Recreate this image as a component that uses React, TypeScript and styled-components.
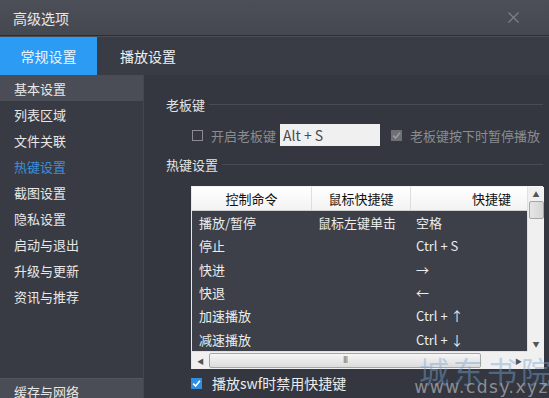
import React from "react";
import styled, { createGlobalStyle } from "styled-components";

const GlobalStyle = createGlobalStyle`
  html, body { margin: 0; padding: 0; background: #34373f; }
  * { box-sizing: border-box; }
`;

const FONT = `"Noto Sans CJK SC", "Noto Sans", sans-serif`;

const Window = styled.div`
  position: relative;
  width: 549px;
  height: 398px;
  overflow: hidden;
  display: flex;
  flex-direction: column;
  background: #34373f;
  font-family: ${FONT};
  font-size: 13px;
  color: #e6e6e6;
`;

const TitleBar = styled.div`
  height: 36px;
  flex: none;
  display: flex;
  align-items: center;
  justify-content: space-between;
  padding: 0 30px 0 13px;
  background: linear-gradient(#4c4f57, #45484f);
  border-bottom: 1px solid #2c2e33;
  font-size: 14px;
  color: #e8e8e8;
`;

const TabBar = styled.div`
  height: 39px;
  flex: none;
  display: flex;
  background: #393c44;
  border-top: 1px solid #4a4d55;
`;

const Tab = styled.div<{ $active?: boolean }>`
  width: ${(p) => (p.$active ? "97px" : "auto")};
  padding: ${(p) => (p.$active ? "0" : "0 0 0 23px")};
  display: flex;
  align-items: center;
  justify-content: ${(p) => (p.$active ? "center" : "flex-start")};
  font-size: 14px;
  background: ${(p) => (p.$active ? "#2b9bf4" : "transparent")};
  color: ${(p) => (p.$active ? "#eaf4ff" : "#f0f0f0")};
`;

const Body = styled.div`
  flex: 1;
  display: flex;
  min-height: 0;
`;

const Sidebar = styled.div`
  width: 144px;
  flex: none;
  display: flex;
  flex-direction: column;
  background: #383b43;
  border-right: 1px solid #44474e;
`;

const NavItem = styled.div<{ $selected?: boolean; $active?: boolean }>`
  height: 26px;
  flex: none;
  display: flex;
  align-items: center;
  padding-left: 14px;
  background: ${(p) => (p.$selected ? "#4a4d55" : "transparent")};
  color: ${(p) => (p.$active ? "#3a8fdc" : "#e8e8e8")};
`;

const Spacer = styled.div`
  flex: 1;
`;

const NavFooter = styled(NavItem)`
  height: 20px;
  align-items: flex-start;
  padding-top: 3px;
  background: #4a4d55;
  border-top: 1px solid #52555c;
`;

const Main = styled.div`
  flex: 1;
  display: flex;
  flex-direction: column;
  padding: 19px 8px 0 22px;
  background: #34373f;
`;

const SectionTitle = styled.div`
  display: flex;
  align-items: center;
  gap: 4px;
  height: 20px;
  color: #e4e4e4;
  &::after {
    content: "";
    flex: 1;
    height: 1px;
    background: #484b52;
  }
`;

const BossRow = styled.div`
  display: flex;
  align-items: center;
  height: 22px;
  margin: 10px 0 8px 26px;
  color: #8a8c91;
`;

const Box = styled.span<{ $disabled?: boolean; $blue?: boolean }>`
  width: 11px;
  height: 11px;
  flex: none;
  display: inline-flex;
  align-items: center;
  justify-content: center;
  border: 1px solid ${(p) => (p.$blue ? "#2f8ee0" : p.$disabled ? "#6e7075" : "#8a8c91")};
  background: ${(p) => (p.$blue ? "#2f8ee0" : p.$disabled ? "#6e7075" : "transparent")};
  margin-right: 8px;
`;

const KeyInput = styled.div`
  width: 100px;
  height: 22px;
  margin: 0 11px 0 4px;
  display: flex;
  align-items: center;
  padding-left: 3px;
  background: #f0f0f0;
  color: #4a4a4a;
  font-size: 14px;
`;

const Table = styled.div`
  margin: 12px 0 0 25px;
  width: 352px;
  height: 183px;
  flex: none;
  display: grid;
  grid-template-columns: 335px 17px;
  grid-template-rows: 164px 18px;
  border: 1px solid #e8e8e8;
  border-top-color: #f4f4f4;
  background: #3d4048;
`;

const Grid = styled.div`
  display: flex;
  flex-direction: column;
  overflow: hidden;
`;

const COLS = "120px 99px 116px";

const HeadRow = styled.div`
  height: 24px;
  flex: none;
  display: grid;
  grid-template-columns: ${COLS};
  background: linear-gradient(#ffffff, #f3f3f3);
  color: #111;
  border-bottom: 1px solid #d0d0d0;
`;

const HeadCell = styled.div<{ $align?: string }>`
  display: flex;
  align-items: center;
  justify-content: ${(p) => p.$align || "center"};
  padding-right: ${(p) => (p.$align === "flex-end" ? "16px" : "0")};
  border-right: 1px solid #dedede;
  &:last-child { border-right: none; }
`;

const Row = styled.div`
  height: 23.3px;
  flex: none;
  display: grid;
  grid-template-columns: ${COLS};
  align-items: center;
  color: #ececec;
`;

const Cell = styled.div<{ $pad: number }>`
  padding-left: ${(p) => p.$pad}px;
  white-space: nowrap;
`;

const VScroll = styled.div`
  display: flex;
  flex-direction: column;
  align-items: center;
  background: #f0f0f0;
  border-left: 1px solid #e0e0e0;
`;

const Arrow = styled.div`
  height: 14px;
  width: 100%;
  display: flex;
  align-items: center;
  justify-content: center;
  color: #555;
  font-size: 7px;
  flex: none;
`;

const VThumb = styled.div`
  width: 15px;
  height: 18px;
  flex: none;
  background: linear-gradient(90deg, #e6e6e6, #d4d4d4);
  border: 1px solid #a6a6a6;
  border-radius: 2px;
`;

const HScroll = styled.div`
  display: flex;
  align-items: center;
  background: #f0f0f0;
  border-top: 1px solid #e0e0e0;
`;

const HArrow = styled.div`
  width: 17px;
  flex: none;
  display: flex;
  justify-content: center;
  color: #555;
  font-size: 7px;
`;

const HThumb = styled.div`
  width: 272px;
  height: 15px;
  flex: none;
  display: flex;
  align-items: center;
  justify-content: center;
  background: linear-gradient(#f6f6f6, #dcdcdc);
  border: 1px solid #a6a6a6;
  border-radius: 2px;
  color: #777;
  font-family: "DejaVu Sans", sans-serif;
  font-size: 8px;
  letter-spacing: -1px;
`;

const Corner = styled.div`
  background: #f0f0f0;
`;

const SwfRow = styled.div`
  display: flex;
  align-items: center;
  margin: 6px 0 0 25px;
  height: 16px;
  color: #ececec;
  font-size: 14px;
`;

const SwfLabel = styled.span`
  margin-left: 2px;
`;

const Watermark = styled.div`
  position: absolute;
  right: -6px;
  bottom: 2px;
  display: flex;
  flex-direction: column;
  align-items: flex-end;
  pointer-events: none;
  line-height: 1;
`;

const WaterBig = styled.div`
  font-size: 30px;
  letter-spacing: 4px;
  color: rgba(120, 165, 215, 0.45);
`;

const WaterSmall = styled.div`
  font-family: "DejaVu Sans", sans-serif;
  font-size: 17px;
  letter-spacing: 1.5px;
  color: rgba(170, 172, 178, 0.75);
  margin-top: -6px;
  margin-right: 6px;
`;

const Check = ({ color }: { color: string }) => (
  <svg width="9" height="9" viewBox="0 0 9 9">
    <path d="M1.2 4.6 L3.6 7 L7.9 1.8" fill="none" stroke={color} strokeWidth="1.6" />
  </svg>
);

const nav = ["列表区域", "文件关联", "热键设置", "截图设置", "隐私设置", "启动与退出", "升级与更新", "资讯与推荐"];

const rows = [
  ["播放/暂停", "鼠标左键单击", "空格"],
  ["停止", "", "Ctrl + S"],
  ["快进", "", "→"],
  ["快退", "", "←"],
  ["加速播放", "", "Ctrl + ↑"],
  ["减速播放", "", "Ctrl + ↓"],
];

export default function App() {
  return (
    <Window>
      <GlobalStyle />
      <TitleBar>
        <span>高级选项</span>
        <svg width="11" height="11" viewBox="0 0 11 11">
          <path d="M0.5 0.5 L10.5 10.5 M10.5 0.5 L0.5 10.5" stroke="#7d8087" strokeWidth="1.2" />
        </svg>
      </TitleBar>
      <TabBar>
        <Tab $active>常规设置</Tab>
        <Tab>播放设置</Tab>
      </TabBar>
      <Body>
        <Sidebar>
          <NavItem $selected>基本设置</NavItem>
          {nav.map((n) => (
            <NavItem key={n} $active={n === "热键设置"}>
              {n}
            </NavItem>
          ))}
          <Spacer />
          <NavFooter>缓存与网络</NavFooter>
        </Sidebar>
        <Main>
          <SectionTitle>老板键</SectionTitle>
          <BossRow>
            <Box />
            开启老板键
            <KeyInput>Alt + S</KeyInput>
            <Box $disabled>
              <Check color="#9a9ca0" />
            </Box>
            老板键按下时暂停播放
          </BossRow>
          <SectionTitle>热键设置</SectionTitle>
          <Table>
            <Grid>
              <HeadRow>
                <HeadCell>控制命令</HeadCell>
                <HeadCell>鼠标快捷键</HeadCell>
                <HeadCell $align="flex-end">快捷键</HeadCell>
              </HeadRow>
              {rows.map((r) => (
                <Row key={r[0]}>
                  <Cell $pad={7}>{r[0]}</Cell>
                  <Cell $pad={6}>{r[1]}</Cell>
                  <Cell $pad={5}>{r[2]}</Cell>
                </Row>
              ))}
            </Grid>
            <VScroll>
              <Arrow>▲</Arrow>
              <VThumb />
              <Spacer />
              <Arrow>▼</Arrow>
            </VScroll>
            <HScroll>
              <HArrow>◀</HArrow>
              <HThumb>III</HThumb>
              <Spacer />
              <HArrow>▶</HArrow>
            </HScroll>
            <Corner />
          </Table>
          <SwfRow>
            <Box $blue>
              <Check color="#ffffff" />
            </Box>
            <SwfLabel>播放swf时禁用快捷键</SwfLabel>
          </SwfRow>
        </Main>
      </Body>
      <Watermark>
        <WaterBig>城东书院</WaterBig>
        <WaterSmall>www.cdsy.xyz</WaterSmall>
      </Watermark>
    </Window>
  );
}
